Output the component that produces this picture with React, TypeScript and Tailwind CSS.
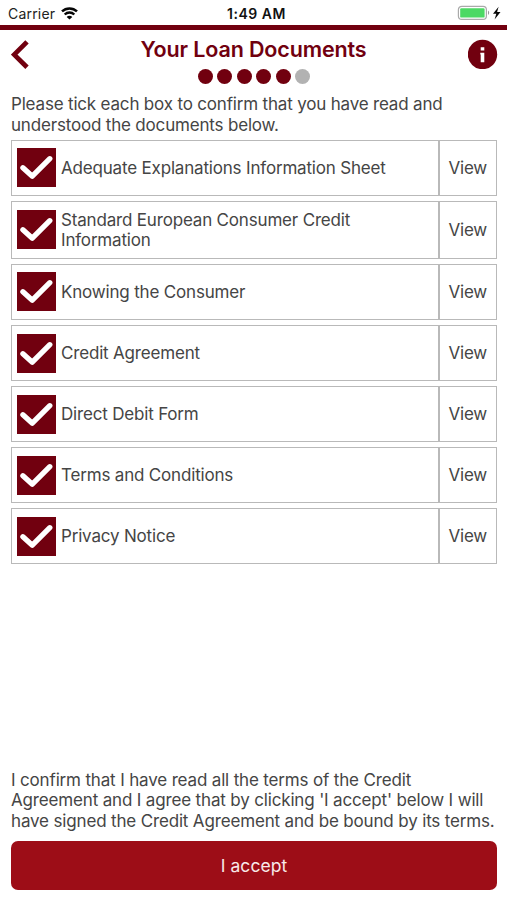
import { useState } from "react";

const documents = [
  { name: "Adequate Explanations Information Sheet", size: "h-14", inner: "pb-px" },
  { name: "Standard European Consumer Credit Information", size: "h-[58px]", inner: "pb-px" },
  { name: "Knowing the Consumer", size: "h-14", inner: "pb-px" },
  { name: "Credit Agreement", size: "h-14", inner: "pb-0" },
  { name: "Direct Debit Form", size: "h-14", inner: "pb-0" },
  { name: "Terms and Conditions", size: "h-14", inner: "pb-0" },
  { name: "Privacy Notice", size: "h-14", inner: "pb-0" },
];

function StatusBar() {
  return (
    <div className="relative flex h-[25px] shrink-0 items-center justify-between pl-2 pr-[5px] pt-[2px] text-[14px] leading-none text-[#222]">
      <div className="flex items-center gap-[6px]">
        <span className="pt-px tracking-[0.2px]">Carrier</span>
        <svg width="17" height="13" viewBox="0 0 17 13" fill="none" stroke="#050505">
          <path d="M1 4.4C5.2.4 11.8.4 16 4.4" strokeWidth="2.5" />
          <path d="M3.7 7.5c2.7-2.6 6.9-2.6 9.6 0" strokeWidth="2.4" />
          <path d="M8.5 12.6 5.7 9.9c1.4-1.4 4.2-1.4 5.6 0z" fill="#050505" stroke="none" />
        </svg>
      </div>
      <span className="absolute left-[227px] top-[7px] whitespace-nowrap text-[14px] font-semibold tracking-[0.5px] text-[#111]">
        1:49 AM
      </span>
      <svg width="49" height="16" viewBox="-4 0 49 16" className="-mt-px">
        <rect x="1.4" y="1.3" width="28" height="13" rx="3.4" fill="#fff" stroke="#aaa" strokeWidth="1.2" />
        <rect x="3.2" y="3.2" width="24.4" height="9.4" rx="1.2" fill="#4cd964" />
        <path d="M31 5.6v4.5c1.6-.7 1.6-3.8 0-4.5z" fill="#999" />
        <path d="M41.6 1.8 36 8.8h3.3l-1.7 5.6 5.9-7.4h-3.4z" fill="#080808" />
      </svg>
    </div>
  );
}

function Header() {
  return (
    <header className="flex h-[65px] shrink-0 justify-between pl-[11px] pr-[9px]">
      <button aria-label="Back" className="mt-[10px] h-[29px] w-[18px]">
        <svg width="18" height="29" viewBox="0 0 18 29" fill="none" stroke="#71000f" strokeWidth="4.8">
          <path d="M16 1.9 3.2 14.6 16 27.3" />
        </svg>
      </button>
      <div className="flex flex-col items-center pt-[6px]">
        <h1 className="ml-[10px] whitespace-nowrap text-[21.5px] font-semibold leading-[26px] tracking-[-0.14px] text-[#71000f]">
          Your Loan Documents
        </h1>
        <div className="ml-[11px] mt-[7px] flex gap-[4.6px]">
          {[1, 2, 3, 4, 5, 6].map((step) => (
            <span
              key={step}
              className={`h-[15px] w-[15px] rounded-full ${step < 6 ? "bg-[#71000f]" : "bg-[#b2b2b2]"}`}
            />
          ))}
        </div>
      </div>
      <button aria-label="Information" className="mt-[9px] h-[30px] w-[30px]">
        <svg width="30" height="30" viewBox="0 0 30 30">
          <circle cx="14.5" cy="15.5" r="14.7" fill="#71000f" />
          <path d="M12.7 8.3h3.6v3.3h-3.6zM12.3 13.7h4v9.5h-3.6v-7.6h-.4z" fill="#fff" />
        </svg>
      </button>
    </header>
  );
}

function DocumentRow({ name, size, inner }: { name: string; size: string; inner: string }) {
  const [checked, setChecked] = useState(true);

  return (
    <li className={`flex ${size}`}>
      <div className={`flex w-[427.5px] items-center border border-[#b9b9b9] pl-[5px] ${inner}`}>
        <button
          role="checkbox"
          aria-checked={checked}
          aria-label={name}
          onClick={() => setChecked(!checked)}
          className="h-[39px] w-[39px] shrink-0 bg-[#71000f]"
        >
          {checked && (
            <svg width="39" height="39" viewBox="0 0 39 39" fill="none" stroke="#fff" strokeWidth="5.3" strokeLinecap="round">
              <path d="M5.9 19.7 15.3 28.2 32.8 10.7" strokeLinejoin="round" />
            </svg>
          )}
        </button>
        <span className="ml-[5px] w-[340px] pt-px leading-[20.5px]">{name}</span>
      </div>
      <button className="w-[58.5px] border border-[#b9b9b9] pt-[2px]">View</button>
    </li>
  );
}

export default function App() {
  return (
    <div className="flex h-[900px] w-[507px] flex-col bg-white font-['Inter',sans-serif] text-[17px] tracking-[-0.18px] text-[#454545]">
      <StatusBar />
      <div className="h-[5px] shrink-0 bg-[#71000f]" />
      <Header />
      <main className="flex flex-1 flex-col px-[11px]">
        <p className="-mt-px h-[46px] whitespace-nowrap leading-[20.5px]">
          Please tick each box to confirm that you have read and
          <br />
          understood the documents below.
        </p>
        <ul className="flex w-[486px] flex-col gap-[5px]">
          {documents.map((doc) => (
            <DocumentRow key={doc.name} {...doc} />
          ))}
        </ul>
        <p className="mt-auto whitespace-nowrap leading-[20.5px] tracking-[-0.16px]">
          I confirm that I have read all the terms of the Credit
          <br />
          Agreement and I agree that by clicking 'I accept' below I will
          <br />
          have signed the Credit Agreement and be bound by its terms.
        </p>
        <button className="mb-[10px] mt-[10px] h-[49px] w-[486px] shrink-0 rounded-[7px] bg-[#9d0d17] pt-[2px] text-[17.5px] tracking-[0.05px] text-[#f8e9e9]">
          I accept
        </button>
      </main>
    </div>
  );
}
